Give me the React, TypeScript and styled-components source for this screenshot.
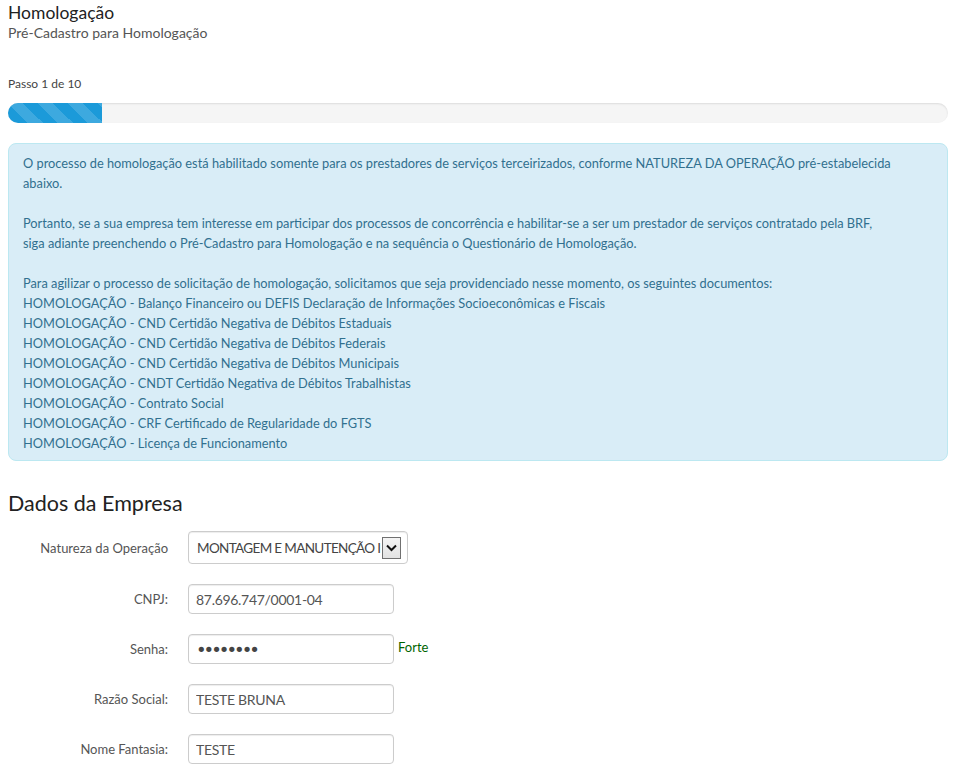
import styled, { createGlobalStyle } from "styled-components";

const GlobalStyle = createGlobalStyle`
  body {
    margin: 0;
    background: #fff;
    font-family: Lato, "Open Sans", sans-serif;
  }
`;

const Page = styled.div`
  width: 940px;
  padding: 3px 8px 0;
`;

const Title = styled.h1`
  margin: 0;
  font-size: 17.5px;
  line-height: 20px;
  font-weight: 400;
  color: #222;
`;

const Subtitle = styled.div`
  margin-top: 1px;
  font-size: 14px;
  line-height: 18px;
  color: #555;
`;

const StepLabel = styled.div`
  margin-top: 33px;
  font-size: 12px;
  line-height: 18px;
  color: #444;
`;

const Progress = styled.div`
  margin-top: 10px;
  height: 20px;
  border-radius: 10px;
  background: #f5f5f5;
  box-shadow: inset 0 1px 2px rgba(0, 0, 0, 0.1);
  overflow: hidden;
`;

const ProgressFill = styled.div`
  height: 100%;
  background-color: #1b9ad9;
  background-image: linear-gradient(
    45deg,
    rgba(255, 255, 255, 0.15) 25%,
    transparent 25%,
    transparent 50%,
    rgba(255, 255, 255, 0.15) 50%,
    rgba(255, 255, 255, 0.15) 75%,
    transparent 75%,
    transparent
  );
  background-size: 30px 30px;
`;

const InfoBox = styled.div`
  margin-top: 20px;
  padding: 9px 14px 7px;
  background: #d9edf7;
  border: 1px solid #bce8f1;
  border-radius: 8px;
  color: #31708f;
  font-size: 12.8px;
  line-height: 20px;
`;

const Para = styled.p`
  margin: 0 0 20px;
  &:last-child {
    margin-bottom: 0;
  }
`;

const SectionTitle = styled.h2`
  margin: 28px 0 0;
  font-size: 21.5px;
  line-height: 28px;
  font-weight: 400;
  color: #222;
`;

const Form = styled.div`
  margin-top: 14px;
  display: grid;
  grid-template-columns: 160px 1fr;
  column-gap: 20px;
  row-gap: 20px;
  align-items: center;
`;

const Label = styled.label`
  text-align: right;
  font-size: 13px;
  color: #555;
`;

const Field = styled.div`
  display: flex;
  align-items: center;
  gap: 4px;
`;

const Input = styled.input`
  box-sizing: border-box;
  width: 206px;
  height: 30px;
  padding: 0 7px;
  border: 1px solid #ccc;
  border-radius: 4px;
  box-shadow: inset 0 1px 1px rgba(0, 0, 0, 0.075);
  font-family: Lato, "Open Sans", sans-serif;
  font-size: 14px;
  letter-spacing: -0.3px;
  color: #555;
  outline: none;
`;

const PasswordInput = styled(Input)`
  font-family: "DejaVu Sans", sans-serif;
  font-size: 18px;
  letter-spacing: -3px;
  color: #444;
`;

const SelectBox = styled.div`
  box-sizing: border-box;
  width: 220px;
  height: 33px;
  padding: 0 6px 0 8px;
  border: 1px solid #ccc;
  border-radius: 4px;
  box-shadow: inset 0 1px 1px rgba(0, 0, 0, 0.075);
  display: flex;
  align-items: center;
  gap: 1px;
`;

const SelectText = styled.span`
  flex: 1;
  overflow: hidden;
  white-space: nowrap;
  font-size: 13.5px;
  letter-spacing: -0.65px;
  color: #444;
`;

const DropButton = styled.span`
  box-sizing: border-box;
  width: 19px;
  height: 22px;
  border: 1px solid #707070;
  background: linear-gradient(#f4f4f4, #e2e2e2);
  display: flex;
  align-items: center;
  justify-content: center;
`;

const Strength = styled.span`
  font-size: 13px;
  color: #006400;
  margin-top: -4px;
`;

const docs = [
  "Balanço Financeiro ou DEFIS  Declaração de Informações Socioeconômicas e Fiscais",
  "CND Certidão Negativa de Débitos Estaduais",
  "CND Certidão Negativa de Débitos Federais",
  "CND Certidão Negativa de Débitos Municipais",
  "CNDT Certidão Negativa de Débitos Trabalhistas",
  "Contrato Social",
  "CRF Certificado de Regularidade do FGTS",
  "Licença de Funcionamento",
];

export default function App() {
  return (
    <>
      <GlobalStyle />
      <Page>
        <Title>Homologação</Title>
        <Subtitle>Pré-Cadastro para Homologação</Subtitle>
        <StepLabel>Passo 1 de 10</StepLabel>
        <Progress>
          <ProgressFill style={{ width: "10%" }} />
        </Progress>
        <InfoBox>
          <Para>
            O processo de homologação está habilitado somente para os prestadores de serviços
            terceirizados, conforme NATUREZA DA OPERAÇÃO pré-estabelecida abaixo.
          </Para>
          <Para>
            Portanto, se a sua empresa tem interesse em participar dos processos de concorrência e
            habilitar-se a ser um prestador de serviços contratado pela BRF,
            <br />
            siga adiante preenchendo o Pré-Cadastro para Homologação e na sequência o Questionário
            de Homologação.
          </Para>
          <Para>
            Para agilizar o processo de solicitação de homologação, solicitamos que seja
            providenciado nesse momento, os seguintes documentos:
            {docs.map((d) => (
              <span key={d}>
                <br />
                HOMOLOGAÇÃO - {d}
              </span>
            ))}
          </Para>
        </InfoBox>
        <SectionTitle>Dados da Empresa</SectionTitle>
        <Form>
          <Label>Natureza da Operação</Label>
          <Field>
            <SelectBox>
              <SelectText>MONTAGEM E MANUTENÇÃO INDUSTRIAL</SelectText>
              <DropButton>
                <svg width="11" height="8" viewBox="0 0 11 8">
                  <path d="M1 1.5 L5.5 6 L10 1.5" fill="none" stroke="#111" strokeWidth="2" />
                </svg>
              </DropButton>
            </SelectBox>
          </Field>
          <Label>CNPJ:</Label>
          <Field>
            <Input defaultValue="87.696.747/0001-04" />
          </Field>
          <Label>Senha:</Label>
          <Field>
            <PasswordInput type="password" defaultValue="12345678" />
            <Strength>Forte</Strength>
          </Field>
          <Label>Razão Social:</Label>
          <Field>
            <Input defaultValue="TESTE BRUNA" />
          </Field>
          <Label>Nome Fantasia:</Label>
          <Field>
            <Input defaultValue="TESTE" />
          </Field>
        </Form>
      </Page>
    </>
  );
}
